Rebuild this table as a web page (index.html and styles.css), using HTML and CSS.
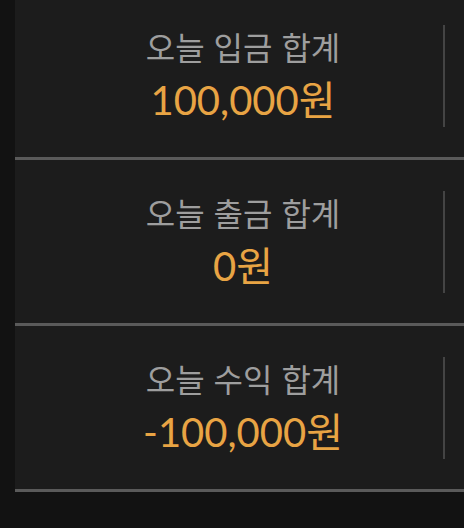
FILE: index.html
```html
<!DOCTYPE html>
<html lang="ko">
<head>
<meta charset="utf-8">
<link rel="stylesheet" href="styles.css">
</head>
<body>
<div class="list">
  <div class="panel">
    <div class="content">
      <div class="label">오늘 입금 합계</div>
      <div class="value">100,000원</div>
    </div>
    <div class="rule"></div>
  </div>
  <div class="panel">
    <div class="content">
      <div class="label">오늘 출금 합계</div>
      <div class="value">0원</div>
    </div>
    <div class="rule"></div>
  </div>
  <div class="panel">
    <div class="content">
      <div class="label">오늘 수익 합계</div>
      <div class="value">-100,000원</div>
    </div>
    <div class="rule"></div>
  </div>
</div>
</body>
</html>
```

FILE: styles.css
```css
html, body {
  margin: 0;
  padding: 0;
  background: #121212;
  height: 100%;
}
body {
  font-family: "Noto Sans CJK KR", "Noto Sans", sans-serif;
}
.list {
  margin-left: 15px;
  margin-top: -6px;
  background: #1c1c1c;
}
.panel {
  display: flex;
  align-items: center;
  height: 163px;
  border-bottom: 3px solid #5a5a5a;
}
.content {
  flex: 1;
  text-align: center;
  padding-left: 28px;
  padding-bottom: 4px;
}
.label {
  font-size: 32px;
  line-height: 44px;
  margin-bottom: 8px;
  color: #9e9e9e;
}
.value {
  font-family: Lato, "Noto Sans CJK KR", sans-serif;
  font-size: 40px;
  line-height: 48px;
  margin-top: 2px;
  color: #e8a444;
}
.rule {
  width: 2px;
  height: 102px;
  background: #444;
  margin-right: 19px;
}
```
